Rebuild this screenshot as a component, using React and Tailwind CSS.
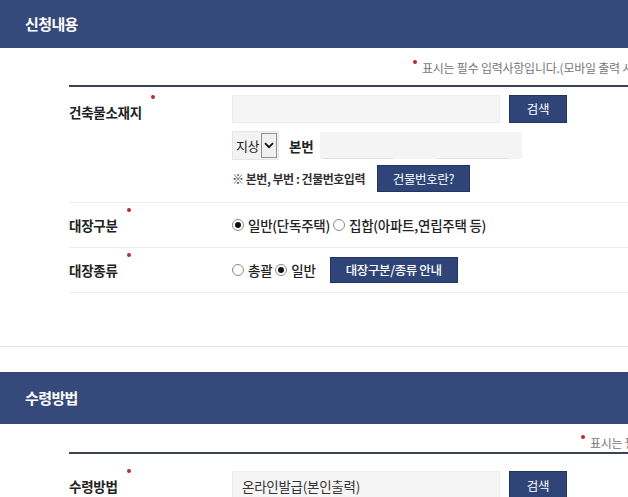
import React from "react";

function Dot({ className = "" }) {
  return <span className={"block shrink-0 w-[4px] h-[4px] rounded-full bg-[#c0262d] " + className} />;
}

function Label({ children }) {
  return (
    <div className="flex items-start">
      <span className="text-[13.5px] leading-[16px] font-bold tracking-[-0.02em] text-[#222]">{children}</span>
      <Dot className="ml-[9px] -mt-[9px]" />
    </div>
  );
}

function Radio({ checked }) {
  return (
    <span className="inline-flex w-[12px] h-[12px] rounded-full border border-[#8a8a8a] bg-white items-center justify-center mr-[4px]">
      {checked && <span className="block w-[6px] h-[6px] rounded-full bg-[#111]" />}
    </span>
  );
}

function Btn({ children, className = "" }) {
  return (
    <div className={"flex items-center justify-center bg-[#2f4577] border border-[#22355f] text-white text-[12.5px] leading-[14px] tracking-[-0.03em] " + className}>
      {children}
    </div>
  );
}

function Note({ pl, children }) {
  return (
    <div className="flex items-start whitespace-nowrap" style={{ paddingLeft: pl }}>
      <Dot className="mt-[0px]" />
      <span className="ml-[5px] text-[12px] leading-[16px] tracking-[-0.02em] text-[#777]">{children}</span>
    </div>
  );
}

export default function App() {
  return (
    <div className="w-[628px] h-[497px] overflow-hidden bg-white font-['Noto_Sans_CJK_KR','Noto_Sans',sans-serif] text-[#222]">
      {/* Section 1 header */}
      <div className="h-[48px] bg-[#35497a] flex items-center pl-[25px]">
        <span className="text-white text-[15px] leading-[18px] font-bold tracking-[-0.04em]">신청내용</span>
      </div>
      <div className="h-[37px] pt-[12px]">
        <Note pl={413}>표시는 필수 입력사항입니다.(모바일 출력 시 제한됩니다)</Note>
      </div>
      <div className="ml-[69px] border-t-2 border-[#3a4357]">
        {/* Row 1 */}
        <div className="grid grid-cols-[163px_1fr] border-b border-[#ebebeb] pt-[8px] pb-[10px]">
          <div className="pt-[9px]">
            <Label>건축물소재지</Label>
          </div>
          <div className="flex flex-col">
            <div className="flex items-center gap-[9px]">
              <div className="w-[268px] h-[28px] bg-[#f5f5f5] border border-[#ececec]" />
              <Btn className="w-[58px] h-[28px]">검색</Btn>
            </div>
            <div className="flex items-center mt-[8px] h-[29px]">
              <div className="flex items-center w-[47px] h-[29px] bg-[#f3f3f3] border border-[#e6e6e6]">
                <span className="ml-[3px] text-[13px] leading-[16px] tracking-[-0.04em] text-[#222]">지상</span>
                <span className="ml-auto mr-[1px] w-[16px] h-[25px] border border-[#8f8f8f] bg-[#f0f0f0] flex items-center justify-center">
                  <svg width="10" height="7" viewBox="0 0 10 7">
                    <path d="M1 1.2 L5 5.2 L9 1.2" fill="none" stroke="#111" strokeWidth="1.8" />
                  </svg>
                </span>
              </div>
              <span className="ml-[10px] text-[13.5px] leading-[16px] font-bold tracking-[-0.02em] text-[#222]">본번</span>
              <div className="ml-[7px] w-[202px] h-[27px] bg-[#f4f4f4] flex items-end">
                <span className="block ml-[2px] w-[71px] h-[1px] bg-[#e2e2e2]" />
                <span className="block ml-[45px] w-[71px] h-[1px] bg-[#e2e2e2]" />
              </div>
            </div>
            <div className="flex items-center mt-[5px] h-[27px]">
              <span className="text-[12px] leading-[14px] font-bold tracking-[-0.04em] text-[#333]">※ 본번, 부번 : 건물번호입력</span>
              <Btn className="ml-[12px] w-[93px] h-[27px]">건물번호란?</Btn>
            </div>
          </div>
        </div>
        {/* Row 2 */}
        <div className="grid grid-cols-[163px_1fr] border-b border-[#ebebeb] h-[45px] items-center">
          <Label>대장구분</Label>
          <div className="flex items-center text-[13.5px] leading-[16px] font-medium tracking-[-0.02em] text-[#222]">
            <Radio checked />
            <span>일반(단독주택)</span>
            <span className="ml-[3px]" />
            <Radio />
            <span>집합(아파트,연립주택 등)</span>
          </div>
        </div>
        {/* Row 3 */}
        <div className="grid grid-cols-[163px_1fr] border-b border-[#ebebeb] h-[45px] items-center">
          <Label>대장종류</Label>
          <div className="flex items-center text-[13.5px] leading-[16px] font-medium tracking-[-0.02em] text-[#222]">
            <Radio />
            <span>총괄</span>
            <span className="ml-[3px]" />
            <Radio checked />
            <span>일반</span>
            <Btn className="ml-[14px] w-[128px] h-[26px]">대장구분/종류 안내</Btn>
          </div>
        </div>
      </div>
      <div className="h-[53px]" />
      <div className="border-t border-[#e3e3e3] h-[26px]" />
      {/* Section 2 header */}
      <div className="h-[52px] bg-[#35497a] flex items-center pl-[25px]">
        <span className="text-white text-[15px] leading-[18px] font-bold tracking-[-0.04em]">수령방법</span>
      </div>
      <div className="h-[28px] pt-[11px]">
        <Note pl={581}>표시는 필수 입력사항입니다.</Note>
      </div>
      <div className="ml-[69px] border-t-2 border-[#3a4357]">
        <div className="grid grid-cols-[163px_1fr] pt-[17px]">
          <div className="pt-[7px]">
            <Label>수령방법</Label>
          </div>
          <div className="flex items-start gap-[9px]">
            <div className="w-[268px] h-[30px] bg-[#f5f5f5] border border-[#ececec] flex items-center pl-[9px]">
              <span className="text-[13.5px] leading-[16px] tracking-[-0.02em] text-[#333]">온라인발급(본인출력)</span>
            </div>
            <Btn className="w-[58px] h-[30px]">검색</Btn>
          </div>
        </div>
      </div>
    </div>
  );
}
